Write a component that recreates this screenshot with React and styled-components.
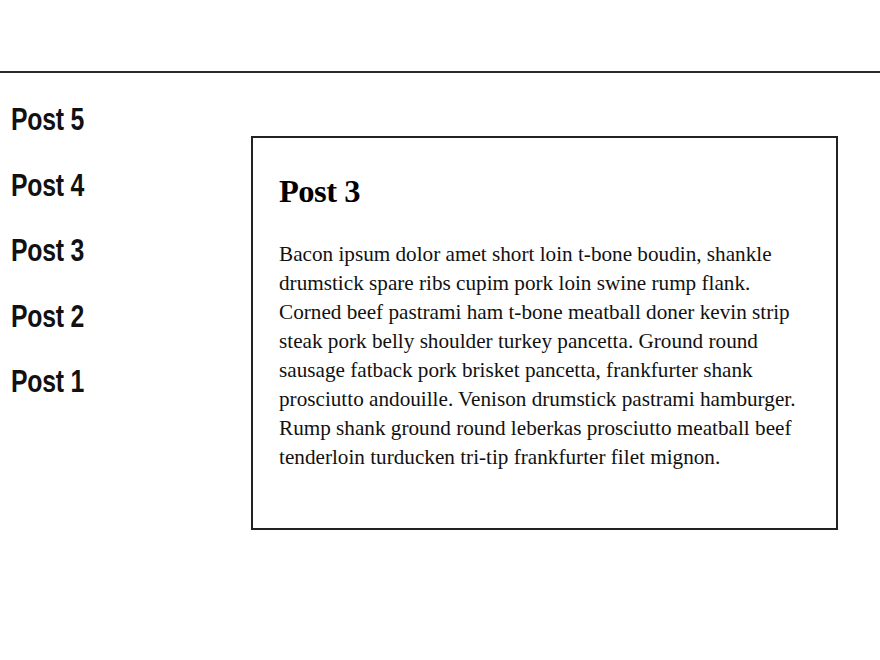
import React from "react";
import styled, { createGlobalStyle } from "styled-components";

const Global = createGlobalStyle`
  html, body { margin: 0; padding: 0; background: #fff; }
  body { font-family: "Liberation Serif", "Times New Roman", serif; color: #000; }
`;

const Page = styled.div`
  width: 880px;
  height: 660px;
  display: flex;
  flex-direction: column;
`;

const TopBar = styled.header`
  height: 71px;
  border-bottom: 2px solid #2b2b2b;
`;

const Main = styled.main`
  display: flex;
  align-items: flex-start;
`;

const Sidebar = styled.nav`
  width: 251px;
  flex: none;
  padding-top: 14px;
  display: flex;
  flex-direction: column;
`;

const NavItem = styled.div`
  font-family: "Liberation Sans", Arial, sans-serif;
  font-weight: 700;
  font-size: 31px;
  line-height: 65.5px;
  padding-left: 11px;
  color: #111;
`;

const NavLabel = styled.span`
  display: inline-block;
  transform: scaleX(0.8);
  transform-origin: left center;
  letter-spacing: -0.3px;
`;

const Card = styled.article`
  box-sizing: border-box;
  margin-top: 63px;
  width: 587px;
  height: 394px;
  border: 2px solid #222;
  padding: 35px 28px 28px 26px;
`;

const Title = styled.h2`
  margin: 0;
  font-family: "Liberation Serif", "Times New Roman", serif;
  font-weight: 700;
  font-size: 32.5px;
  line-height: 37px;
  letter-spacing: -0.5px;
`;

const Body = styled.p`
  margin: 30px 0 0;
  font-family: "Liberation Serif", "Times New Roman", serif;
  font-size: 21.2px;
  line-height: 29px;
  color: #111;
`;

const posts = ["Post 5", "Post 4", "Post 3", "Post 2", "Post 1"];

export default function App() {
  return (
    <Page>
      <Global />
      <TopBar />
      <Main>
        <Sidebar>
          {posts.map((p) => (
            <NavItem key={p}>
              <NavLabel>{p}</NavLabel>
            </NavItem>
          ))}
        </Sidebar>
        <Card>
          <Title>Post 3</Title>
          <Body>
            Bacon ipsum dolor amet short loin t-bone boudin, shankle drumstick spare ribs cupim pork loin swine rump flank. Corned beef pastrami ham t-bone meatball doner kevin strip steak pork belly shoulder turkey pancetta. Ground round sausage fatback pork brisket pancetta, frankfurter shank prosciutto andouille. Venison drumstick pastrami hamburger. Rump shank ground round leberkas prosciutto meatball beef tenderloin turducken tri-tip frankfurter filet mignon.
          </Body>
        </Card>
      </Main>
    </Page>
  );
}
